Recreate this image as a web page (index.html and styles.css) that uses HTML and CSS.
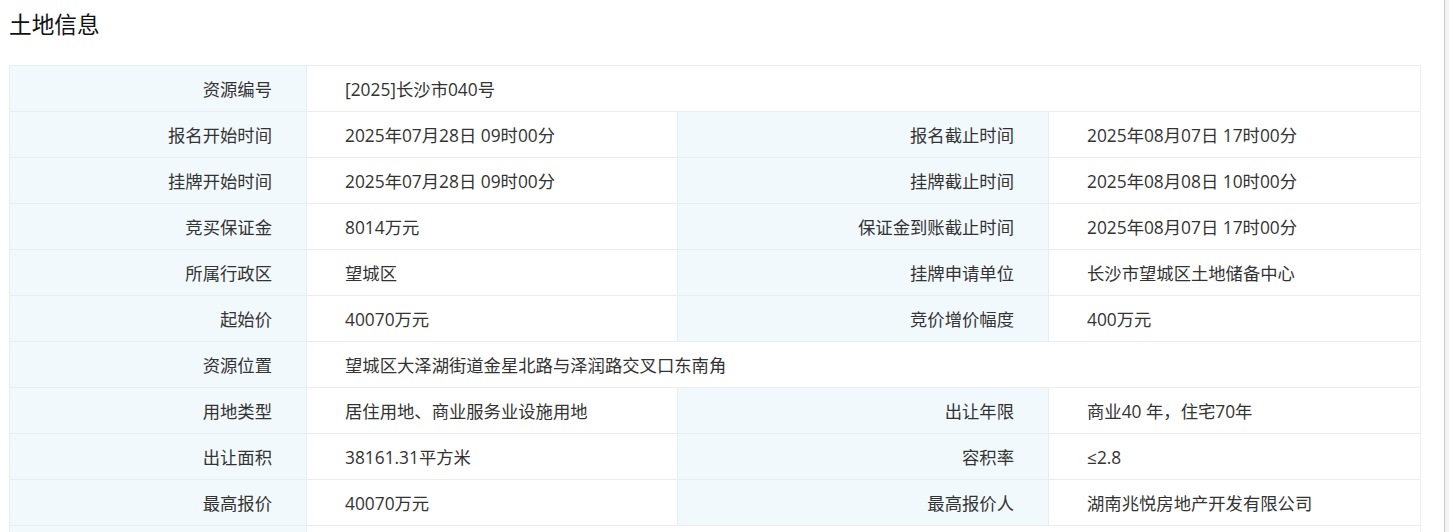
FILE: index.html
```html
<!DOCTYPE html>
<html lang="zh-CN">
<head>
<meta charset="utf-8">
<title>土地信息</title>
<link rel="stylesheet" href="styles.css">
</head>
<body>
<div class="page">
  <h2 class="title">土地信息</h2>
  <table class="info">
    <colgroup>
      <col class="c1"><col class="c2"><col class="c3"><col class="c4">
    </colgroup>
    <tbody>
      <tr><th>资源编号</th><td colspan="3">[2025]长沙市040号</td></tr>
      <tr><th>报名开始时间</th><td>2025年07月28日 09时00分</td><th>报名截止时间</th><td>2025年08月07日 17时00分</td></tr>
      <tr><th>挂牌开始时间</th><td>2025年07月28日 09时00分</td><th>挂牌截止时间</th><td>2025年08月08日 10时00分</td></tr>
      <tr><th>竞买保证金</th><td>8014万元</td><th>保证金到账截止时间</th><td>2025年08月07日 17时00分</td></tr>
      <tr><th>所属行政区</th><td>望城区</td><th>挂牌申请单位</th><td>长沙市望城区土地储备中心</td></tr>
      <tr><th>起始价</th><td>40070万元</td><th>竞价增价幅度</th><td>400万元</td></tr>
      <tr><th>资源位置</th><td colspan="3">望城区大泽湖街道金星北路与泽润路交叉口东南角</td></tr>
      <tr><th>用地类型</th><td>居住用地、商业服务业设施用地</td><th>出让年限</th><td>商业40 年，住宅70年</td></tr>
      <tr><th>出让面积</th><td>38161.31平方米</td><th>容积率</th><td>≤2.8</td></tr>
      <tr><th>最高报价</th><td>40070万元</td><th>最高报价人</th><td>湖南兆悦房地产开发有限公司</td></tr>
      <tr class="cut"><th></th><td colspan="3"></td></tr>
    </tbody>
  </table>
</div>
</body>
</html>
```

FILE: styles.css
```css
html, body {
  margin: 0;
  padding: 0;
  background: #f4f4f4;
  height: 100%;
  overflow: hidden;
}

body {
  font-family: "Open Sans", "Noto Sans CJK SC", "Microsoft YaHei", sans-serif;
  color: #333;
}

.page {
  width: 1445px;
  min-height: 100%;
  box-sizing: border-box;
  background: #fff;
  border-right: 1px solid #c8c8c8;
  padding: 0 9px;
}

.title {
  margin: 0;
  padding-top: 7px;
  height: 58px;
  box-sizing: border-box;
  height: 65px;
  font-family: "Noto Sans CJK SC", sans-serif;
  font-size: 22.67px;
  font-weight: normal;
  line-height: 34px;
  color: #111;
}

.info {
  width: 1411px;
  border-collapse: collapse;
  table-layout: fixed;
  font-size: 17.33px;
}

.c1 { width: 297px; }
.c2 { width: 371px; }
.c3 { width: 371px; }
.c4 { width: 372px; }

.info th,
.info td {
  height: 46px;
  box-sizing: border-box;
  border: 1px solid #e9edf0;
  padding: 0;
  font-weight: normal;
  white-space: nowrap;
  line-height: 22px;
}

.info th {
  background: #f2f9fd;
  text-align: right;
  padding-right: 34px;
}

.info td {
  background: #fff;
  text-align: left;
  padding-left: 38px;
}
```
